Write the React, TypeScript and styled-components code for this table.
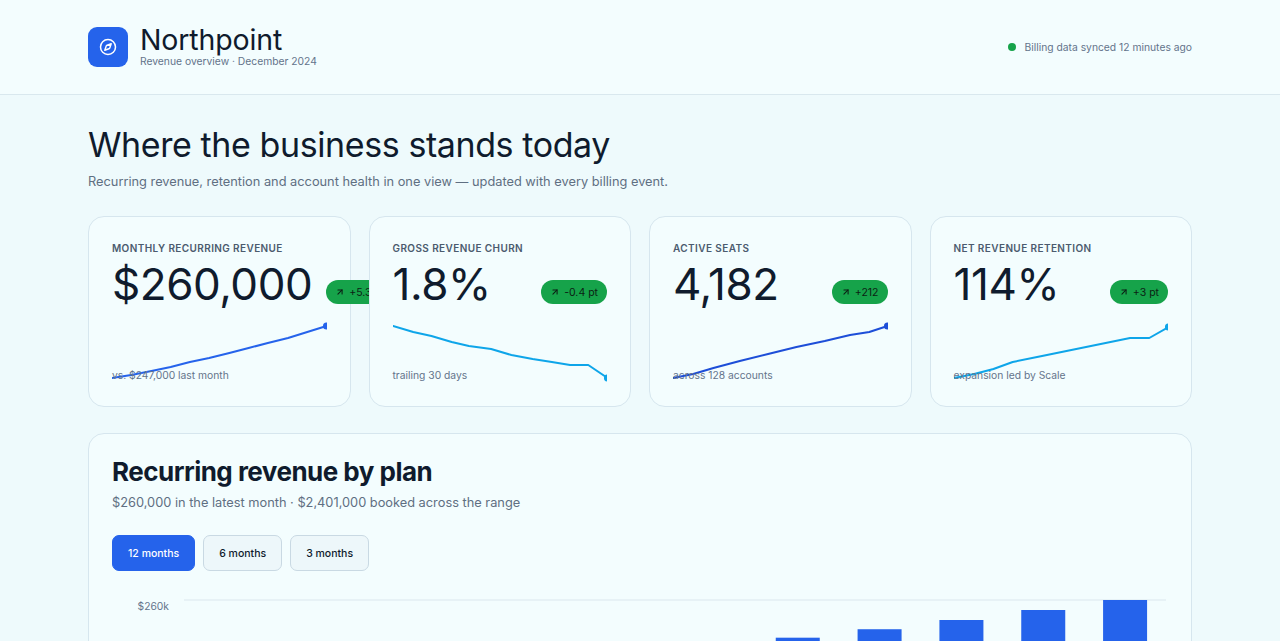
import styled, { createGlobalStyle } from "styled-components";
import { Compass, ArrowUpRight } from "lucide-react";

const GlobalStyle = createGlobalStyle`
  * { box-sizing: border-box; }
  body {
    margin: 0;
    background: #eefafc;
    font-family: Inter, "Noto Sans", sans-serif;
    color: #0f172a;
  }
`;

const TopBar = styled.header`
  background: #f3fdfe;
  border-bottom: 1px solid #d9e8ee;
`;

const TopBarInner = styled.div`
  max-width: 1104px;
  margin: 0 auto;
  padding: 26px 0;
  display: flex;
  align-items: center;
  justify-content: space-between;
`;

const Brand = styled.div`
  display: flex;
  align-items: center;
  gap: 12px;
`;

const LogoMark = styled.div`
  width: 40px;
  height: 40px;
  border-radius: 9px;
  background: #2563eb;
  color: #fff;
  display: flex;
  align-items: center;
  justify-content: center;
`;

const BrandText = styled.div`
  display: flex;
  flex-direction: column;
`;

const BrandName = styled.div`
  font-size: 28.5px;
  line-height: 28px;
  font-weight: 400;
  letter-spacing: -0.005em;
  color: #0f1b2d;
`;

const BrandSub = styled.div`
  font-size: 10.3px;
  line-height: 14px;
  color: #64748b;
`;

const SyncStatus = styled.div`
  display: flex;
  align-items: center;
  gap: 8px;
  font-size: 10.3px;
  color: #64748b;
`;

const Dot = styled.span`
  width: 8px;
  height: 8px;
  border-radius: 50%;
  background: #16a34a;
`;

const Main = styled.main`
  max-width: 1104px;
  margin: 0 auto;
  padding: 29px 0 40px;
`;

const PageTitle = styled.h1`
  margin: 0;
  font-size: 34px;
  line-height: 41px;
  font-weight: 400;
  letter-spacing: -0.012em;
  color: #0f1b2d;
`;

const PageLead = styled.p`
  margin: 7px 0 0;
  font-size: 12.8px;
  line-height: 20px;
  color: #5f6f82;
`;

const StatGrid = styled.div`
  margin-top: 24px;
  display: grid;
  grid-template-columns: repeat(4, 1fr);
  gap: 18px;
`;

const StatCard = styled.div`
  background: #f3fdfe;
  border: 1px solid #d6e6ee;
  border-radius: 16px;
  padding: 23px;
  display: flex;
  flex-direction: column;
  min-width: 0;
`;

const StatLabel = styled.div`
  font-size: 10px;
  line-height: 16px;
  font-weight: 600;
  letter-spacing: 0.04em;
  text-transform: uppercase;
  color: #4b5b6e;
`;

const ValueRow = styled.div`
  margin-top: 4px;
  display: flex;
  align-items: flex-end;
  justify-content: space-between;
  gap: 14px;
`;

const StatValue = styled.div`
  font-size: 44px;
  line-height: 48px;
  font-weight: 400;
  letter-spacing: -0.01em;
  color: #0f1b2d;
  white-space: nowrap;
  flex-shrink: 0;
`;

const DeltaBadge = styled.span`
  flex-shrink: 0;
  margin-bottom: 4px;
  height: 24px;
  padding: 0 9px;
  border-radius: 999px;
  background: #16a34a;
  color: #0b1f14;
  display: inline-flex;
  align-items: center;
  gap: 4px;
  font-size: 10.5px;
  white-space: nowrap;
`;

const Spark = styled.svg`
  display: block;
  margin-top: 14px;
  width: 100%;
  height: 60px;
`;

const StatFoot = styled.div`
  margin-top: -15px;
  font-size: 10.3px;
  line-height: 16px;
  color: #64748b;
`;

const Panel = styled.section`
  margin-top: 26px;
  background: #f3fdfe;
  border: 1px solid #d6e6ee;
  border-radius: 16px;
  padding: 22px 23px 24px;
`;

const PanelTitle = styled.h2`
  margin: 0;
  font-size: 26px;
  line-height: 31px;
  font-weight: 700;
  letter-spacing: -0.02em;
  color: #0f1b2d;
`;

const PanelLead = styled.p`
  margin: 6px 0 0;
  font-size: 12.8px;
  line-height: 20px;
  color: #5f6f82;
`;

const RangeTabs = styled.div`
  margin-top: 22px;
  display: flex;
  gap: 8px;
`;

const RangeButton = styled.button<{ $active?: boolean }>`
  height: 36px;
  padding: 0 15px;
  border-radius: 7px;
  font-family: inherit;
  font-size: 10.5px;
  font-weight: 500;
  cursor: pointer;
  border: 1px solid ${(p) => (p.$active ? "#2563eb" : "#c9d9e3")};
  background: ${(p) => (p.$active ? "#2563eb" : "#edf7fa")};
  color: ${(p) => (p.$active ? "#ffffff" : "#0f1b2d")};
`;

const ChartBox = styled.svg`
  display: block;
  margin-top: 24px;
  width: 100%;
  height: 250px;
`;

type Stat = {
  label: string;
  value: string;
  delta: string;
  foot: string;
  color: string;
  points: [number, number][];
};

const stats: Stat[] = [
  {
    label: "Monthly recurring revenue",
    value: "$260,000",
    delta: "+5.3%",
    foot: "vs. $247,000 last month",
    color: "#2563eb",
    points: [
      [0, 56], [19, 53], [39, 49], [58, 45], [77, 40], [96, 36],
      [116, 31], [135, 26], [154, 21], [174, 16], [193, 10], [212, 4],
    ],
  },
  {
    label: "Gross revenue churn",
    value: "1.8%",
    delta: "-0.4 pt",
    foot: "trailing 30 days",
    color: "#0ea5e9",
    points: [
      [0, 4], [20, 10], [38, 14], [58, 20], [75, 24], [97, 27],
      [117, 33], [138, 37], [157, 40], [175, 43], [193, 43], [212, 56],
    ],
  },
  {
    label: "Active seats",
    value: "4,182",
    delta: "+212",
    foot: "across 128 accounts",
    color: "#1d4ed8",
    points: [
      [0, 56], [20, 52], [40, 46], [66, 39], [94, 32], [122, 25],
      [150, 19], [175, 13], [194, 10], [212, 4],
    ],
  },
  {
    label: "Net revenue retention",
    value: "114%",
    delta: "+3 pt",
    foot: "expansion led by Scale",
    color: "#0ea5e9",
    points: [
      [0, 56], [20, 52], [39, 47], [58, 40], [87, 34], [116, 28],
      [145, 22], [174, 16], [193, 16], [212, 5],
    ],
  },
];

// monthly totals in $k, oldest first (sums to $2,401k)
const monthly = [150, 160, 168, 176, 184, 191, 198, 211, 222, 234, 247, 260];

function Sparkline({ points, color }: { points: [number, number][]; color: string }) {
  const last = points[points.length - 1];
  return (
    <Spark viewBox="0 0 212 60" preserveAspectRatio="none">
      <polyline
        points={points.map((p) => p.join(",")).join(" ")}
        fill="none"
        stroke={color}
        strokeWidth={2}
        strokeLinejoin="round"
        strokeLinecap="round"
      />
      <circle cx={last[0]} cy={last[1]} r={3.5} fill={color} />
    </Spark>
  );
}

function RevenueChart() {
  const left = 72;
  const right = 1054;
  const top = 5;
  const plotH = 200;
  const max = 260;
  const slot = (right - left) / monthly.length;
  const barW = 44;
  const ticks = [260, 195, 130, 65];
  const y = (v: number) => top + ((max - v) / max) * plotH;

  return (
    <ChartBox viewBox="0 0 1054 250" preserveAspectRatio="xMinYMin meet">
      {ticks.map((t) => (
        <g key={t}>
          <line x1={left} x2={right} y1={y(t)} y2={y(t)} stroke="#dbe7ee" strokeWidth={1} />
          <text
            x={57}
            y={y(t) + 10}
            textAnchor="end"
            fontSize={10.3}
            fontFamily="Inter, sans-serif"
            fill="#64748b"
          >
            ${t}k
          </text>
        </g>
      ))}
      {monthly.map((v, i) => (
        <rect
          key={i}
          x={left + i * slot + (slot - barW) / 2}
          y={y(v)}
          width={barW}
          height={top + plotH - y(v)}
          fill="#2563eb"
        />
      ))}
    </ChartBox>
  );
}

export default function App() {
  return (
    <>
      <GlobalStyle />
      <TopBar>
        <TopBarInner>
          <Brand>
            <LogoMark>
              <Compass size={18} strokeWidth={2} />
            </LogoMark>
            <BrandText>
              <BrandName>Northpoint</BrandName>
              <BrandSub>Revenue overview · December 2024</BrandSub>
            </BrandText>
          </Brand>
          <SyncStatus>
            <Dot />
            Billing data synced 12 minutes ago
          </SyncStatus>
        </TopBarInner>
      </TopBar>
      <Main>
        <PageTitle>Where the business stands today</PageTitle>
        <PageLead>
          Recurring revenue, retention and account health in one view — updated with every billing event.
        </PageLead>
        <StatGrid>
          {stats.map((s) => (
            <StatCard key={s.label}>
              <StatLabel>{s.label}</StatLabel>
              <ValueRow>
                <StatValue>{s.value}</StatValue>
                <DeltaBadge>
                  <ArrowUpRight size={10} strokeWidth={2.5} />
                  {s.delta}
                </DeltaBadge>
              </ValueRow>
              <Sparkline points={s.points} color={s.color} />
              <StatFoot>{s.foot}</StatFoot>
            </StatCard>
          ))}
        </StatGrid>
        <Panel>
          <PanelTitle>Recurring revenue by plan</PanelTitle>
          <PanelLead>$260,000 in the latest month · $2,401,000 booked across the range</PanelLead>
          <RangeTabs>
            <RangeButton $active>12 months</RangeButton>
            <RangeButton>6 months</RangeButton>
            <RangeButton>3 months</RangeButton>
          </RangeTabs>
          <RevenueChart />
        </Panel>
      </Main>
    </>
  );
}
